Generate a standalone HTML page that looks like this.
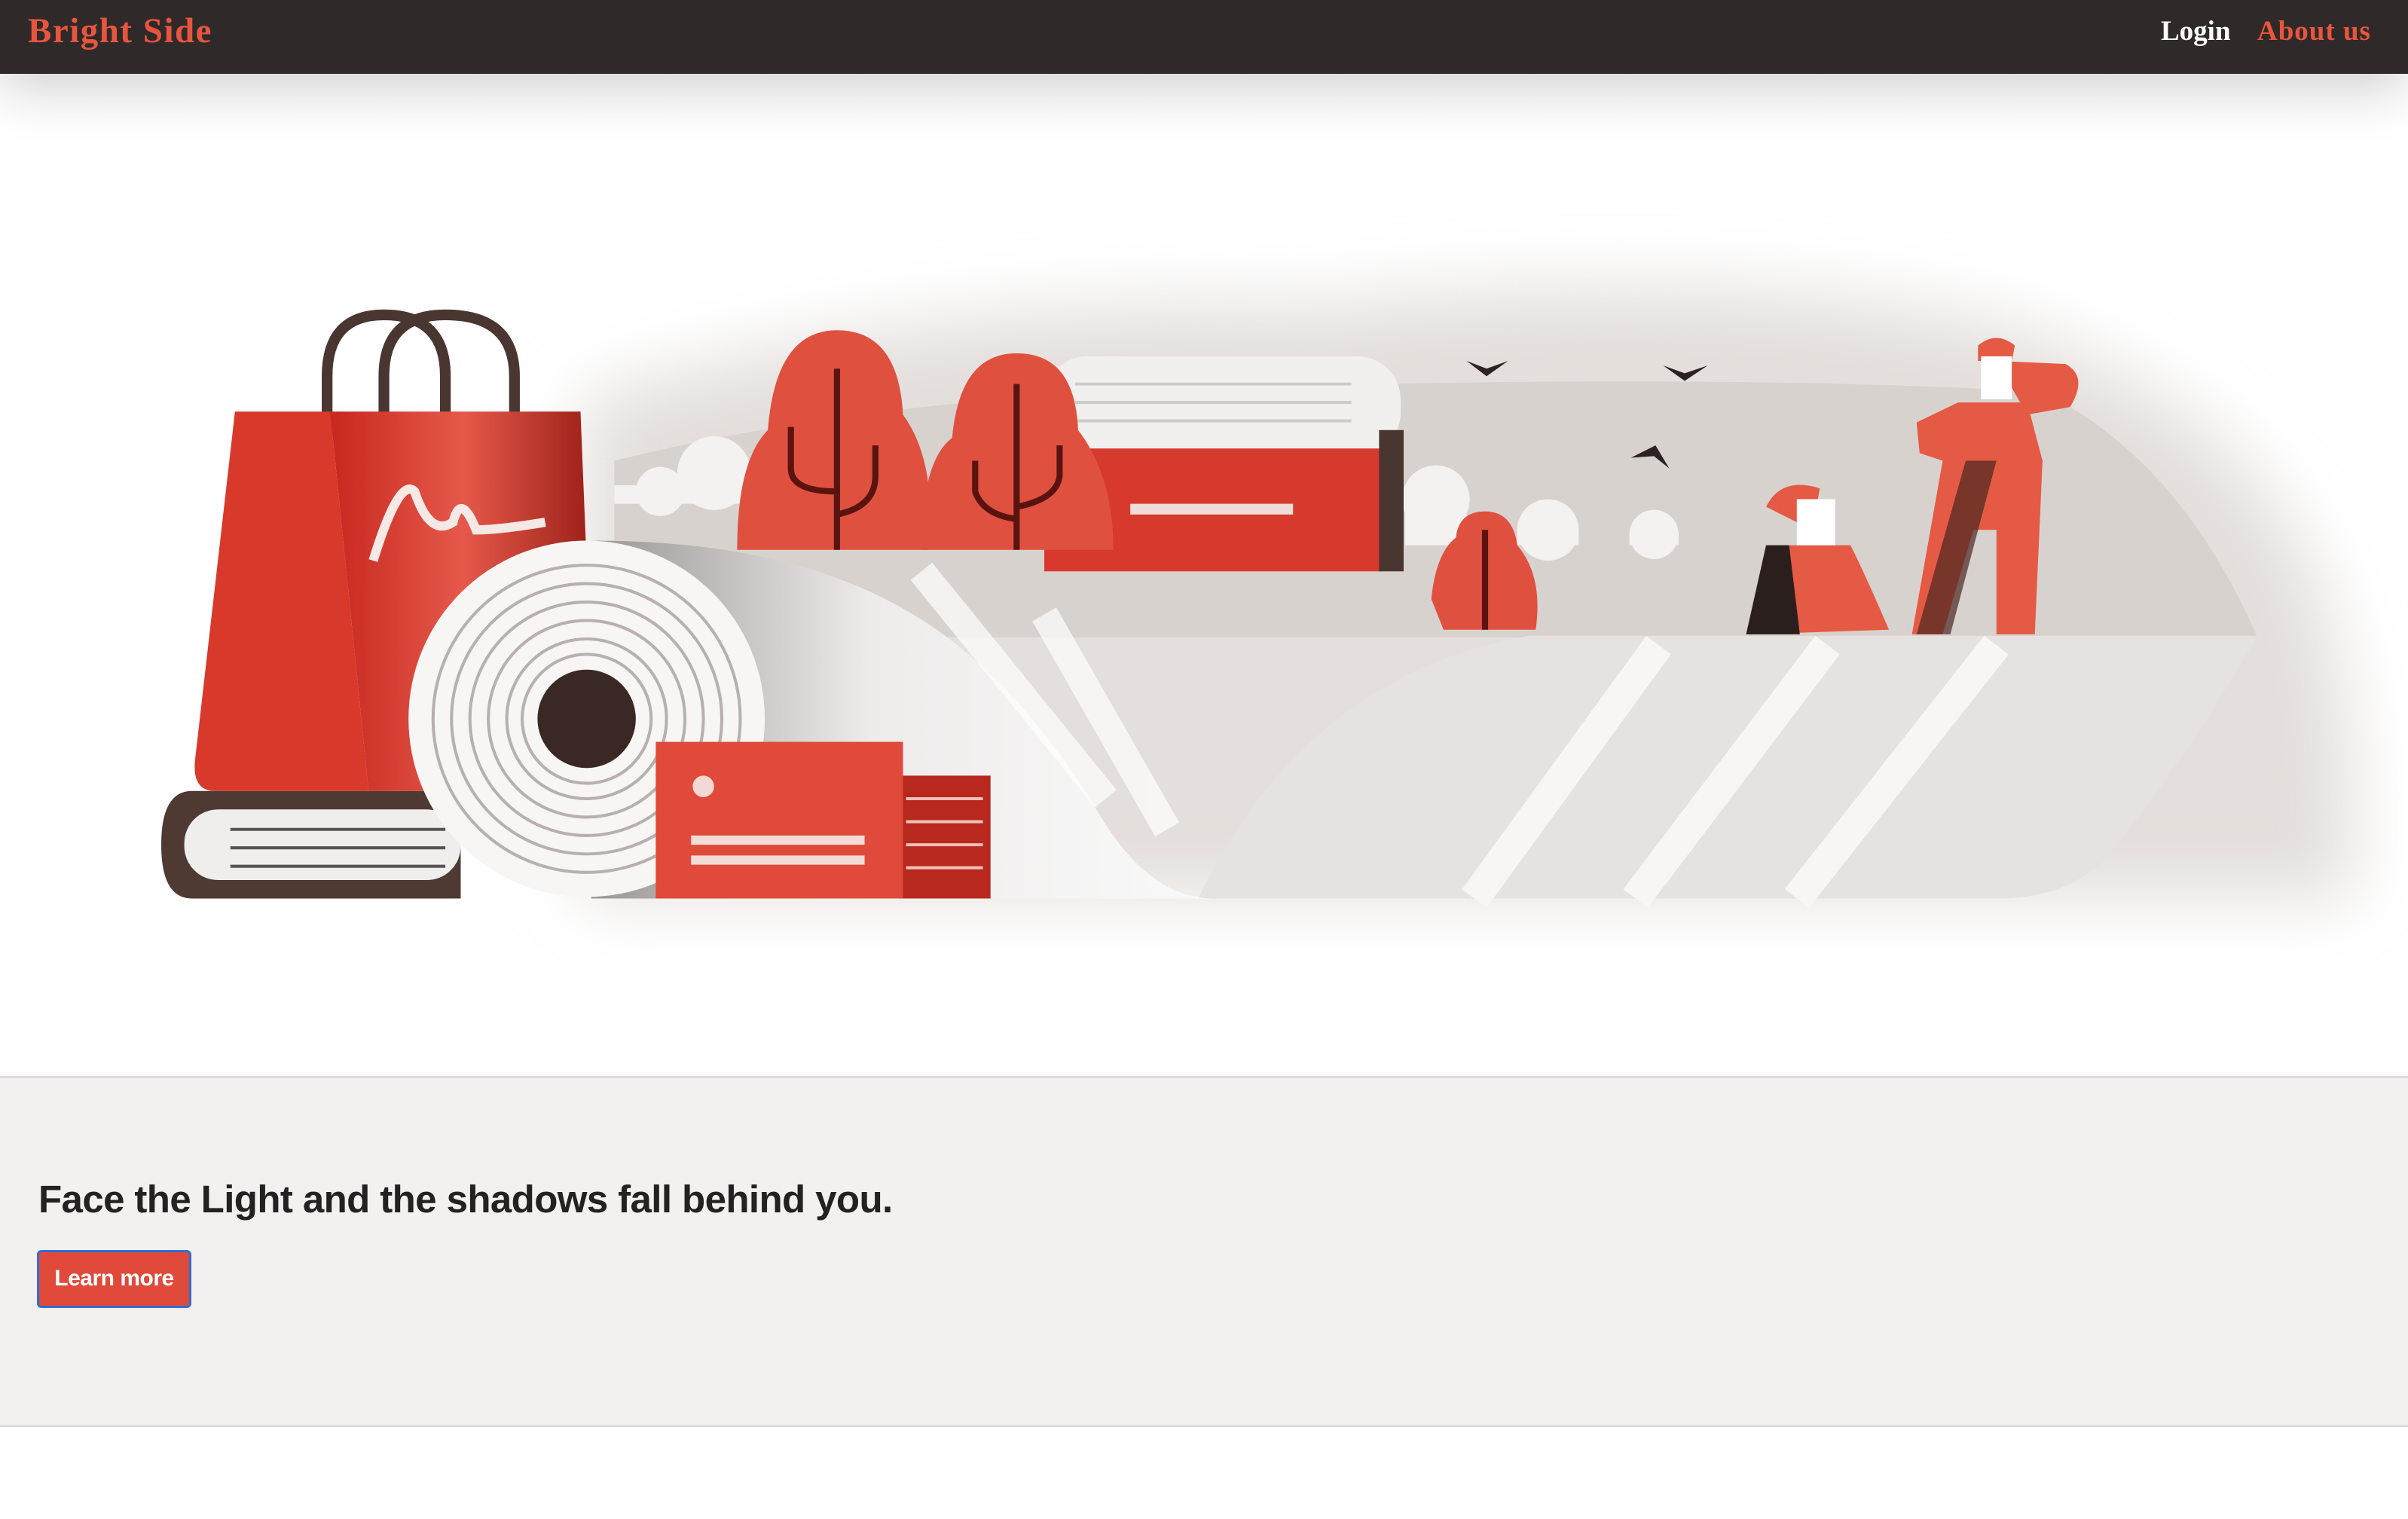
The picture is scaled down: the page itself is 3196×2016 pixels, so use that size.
<!DOCTYPE html>
<html><head><meta charset="utf-8"><style>
*{margin:0;padding:0;box-sizing:border-box}
html,body{width:3196px;height:2016px;overflow:hidden;background:#fff;font-family:"Liberation Sans",sans-serif}
.nav{position:absolute;left:0;top:0;width:3196px;height:98px;background:#2f2a29;box-shadow:0 22px 70px rgba(0,0,0,.18);z-index:2}
.brand{position:absolute;left:37px;top:14px;font:bold 47px "Liberation Serif",serif;color:#e8553f;letter-spacing:1.5px}
.login{position:absolute;left:2868px;top:20px;font:bold 37px "Liberation Serif",serif;color:#fff;letter-spacing:0}
.about{position:absolute;left:2996px;top:20px;font:bold 37px "Liberation Serif",serif;color:#e8553f;letter-spacing:1px}
.ill{position:absolute;left:0;top:0;width:3196px;height:2016px}
.band{position:absolute;left:0;top:1428px;width:3196px;height:466px;background:#f3f0ef;border-top:3px solid #dcdcdc;border-bottom:3px solid #dcdcdc}
.h{position:absolute;left:51px;top:131px;font-size:51px;font-weight:bold;color:#222;letter-spacing:-0.6px}
.btn{position:absolute;left:49px;top:228px;width:205px;height:77px;background:#df4a3a;border:3px solid #2f6fd6;border-radius:6px;color:#fff;font-size:30px;font-weight:bold;text-align:center;line-height:70px;letter-spacing:-.5px}
</style></head><body>
<div class="nav"><div class="brand">Bright Side</div><div class="login">Login</div><div class="about">About us</div></div>
<svg class="ill" viewBox="0 0 1568 989" preserveAspectRatio="none">
<defs>
<filter id="bl" x="-20%" y="-20%" width="140%" height="140%"><feGaussianBlur stdDeviation="22"/></filter>
<linearGradient id="rd" x1="0" x2="1"><stop offset="0" stop-color="#c8281f"/><stop offset=".5" stop-color="#e5594a"/><stop offset="1" stop-color="#9a1e17"/></linearGradient>
<linearGradient id="pp" x1="0" x2="1"><stop offset="0" stop-color="#9a9694"/><stop offset=".45" stop-color="#eeeceb"/><stop offset="1" stop-color="#fafafa"/></linearGradient>
</defs>
<path d="M380 260 Q600 190 850 200 Q1100 170 1300 210 Q1460 260 1510 380 Q1540 480 1530 585 L380 585 Z" fill="#e4dfdc" filter="url(#bl)"/>
<path d="M400 300 Q600 250 900 250 Q1150 245 1330 255 Q1420 300 1470 415 L400 415 Z" fill="#d8d2cf"/>
<!-- clouds -->
<g fill="#f4f2f1"><circle cx="430" cy="320" r="16"/><circle cx="465" cy="308" r="24"/><rect x="400" y="316" width="95" height="12"/>
<circle cx="935" cy="325" r="22"/><rect x="915" y="325" width="40" height="30"/><circle cx="1008" cy="345" r="20"/><rect x="988" y="345" width="40" height="10"/><circle cx="1077" cy="348" r="16"/><rect x="1061" y="348" width="32" height="7"/></g>
<!-- book behind -->
<rect x="680" y="232" width="232" height="65" rx="28" fill="#f2f0ef"/>
<g stroke="#ccc" stroke-width="2"><line x1="700" y1="250" x2="880" y2="250"/><line x1="700" y1="262" x2="880" y2="262"/><line x1="700" y1="274" x2="880" y2="274"/></g>
<rect x="680" y="292" width="220" height="80" fill="#d73a2c"/><rect x="898" y="280" width="16" height="92" fill="#4a3630"/>
<rect x="736" y="328" width="106" height="7" fill="#f0dcd8"/>
<!-- trees -->
<g fill="#e0503f"><path d="M480 358 Q480 300 500 280 Q505 215 545 215 Q585 215 588 270 Q610 300 605 358Z"/>
<path d="M600 358 Q600 300 620 285 Q625 230 662 230 Q700 230 702 280 Q725 310 725 358Z"/>
<path d="M932 390 Q935 360 948 350 Q950 333 967 333 Q985 333 988 355 Q1005 375 1000 410 L940 410Z"/></g>
<g stroke="#5a1410" stroke-width="4" fill="none"><path d="M545 240 V358 M515 278 V305 Q515 320 545 320 M570 290 V310 Q570 330 545 335"/>
<path d="M662 250 V358 M635 300 V320 Q640 335 662 338 M690 290 V310 Q688 325 662 330"/><path d="M967 345 V410"/></g>
<!-- birds -->
<g fill="#2a2322"><path d="M955 235 L968 245 L982 235 L968 240Z"/><path d="M1083 238 L1097 248 L1112 238 L1097 243Z"/><path d="M1062 298 L1078 290 L1087 305 L1077 297Z"/></g>
<!-- people -->
<g fill="#e55a44"><path d="M1288 225 Q1300 215 1312 225 L1310 235 L1288 235Z"/><path d="M1275 262 L1320 262 L1330 300 L1325 413 L1300 413 L1300 345 L1285 345 L1265 413 L1245 413 L1265 300 L1250 295 L1248 275Z"/><path d="M1300 235 L1345 237 Q1360 245 1348 265 L1320 270Z"/><path d="M1150 330 Q1160 310 1185 318 L1180 345 Z"/><path d="M1150 355 L1205 355 Q1215 375 1230 410 L1140 413 Z"/></g>
<rect x="1290" y="232" width="20" height="28" fill="#fff"/><rect x="1170" y="325" width="25" height="30" fill="#fff"/>
<path d="M1150 355 L1165 355 L1172 413 L1137 413Z" fill="#2b1f1d"/><path d="M1280 300 L1300 300 L1270 413 L1248 413Z" fill="#4a2520" opacity=".7"/>
<!-- back sheet -->
<path d="M780 585 Q850 440 995 414 L1470 414 Q1420 500 1370 560 Q1345 585 1300 585Z" fill="#e6e2e0"/>
<g stroke="#f7f6f5" stroke-width="20" fill="none"><path d="M1080 420 L960 585"/><path d="M1190 420 L1065 585"/><path d="M1300 420 L1170 585"/></g>
<!-- front curl -->
<path d="M385 352 C580 352 650 430 710 520 Q745 585 790 585 L385 585Z" fill="url(#pp)"/>
<g stroke="#fff" stroke-width="18" opacity=".7" fill="none"><path d="M600 372 L720 520"/><path d="M680 400 L760 540"/></g>
<!-- bottom book -->
<path d="M125 515 L300 515 L300 585 L125 585 Q105 585 105 550 Q105 515 125 515Z" fill="#4e3a32"/>
<rect x="120" y="527" width="180" height="46" rx="22" fill="#f0eeed"/>
<g stroke="#555" stroke-width="2"><line x1="150" y1="540" x2="290" y2="540"/><line x1="150" y1="552" x2="290" y2="552"/><line x1="150" y1="564" x2="290" y2="564"/></g>
<!-- bag -->
<g fill="none" stroke="#4a3630" stroke-width="7"><path d="M213 300 V245 Q213 205 250 205 Q290 205 290 245 V295"/><path d="M250 300 V245 Q250 205 290 205 Q335 205 335 245 V295"/></g>
<path d="M153 268 L215 268 L240 515 L140 515 Q125 515 127 495Z" fill="#d8392b"/>
<path d="M215 268 L378 268 L388 515 L240 515Z" fill="url(#rd)"/>
<path d="M243 365 Q260 310 270 320 Q280 350 295 340 Q300 320 310 345 Q325 345 355 340" stroke="#f6e8e4" stroke-width="6" fill="none"/>
<!-- roll -->
<circle cx="382" cy="468" r="116" fill="#f7f6f5"/>
<g fill="none" stroke="#b8b0ae" stroke-width="2"><circle cx="382" cy="468" r="100"/><circle cx="382" cy="468" r="88"/><circle cx="382" cy="468" r="76"/><circle cx="382" cy="468" r="64"/><circle cx="382" cy="468" r="52"/><circle cx="382" cy="468" r="42"/></g>
<circle cx="382" cy="468" r="32" fill="#3a2824"/>
<!-- card -->
<rect x="585" y="505" width="60" height="80" fill="#b8281f"/>
<g stroke="#f0c0b8" stroke-width="2"><line x1="590" y1="520" x2="640" y2="520"/><line x1="590" y1="535" x2="640" y2="535"/><line x1="590" y1="550" x2="640" y2="550"/><line x1="590" y1="565" x2="640" y2="565"/></g>
<rect x="427" y="483" width="161" height="102" fill="#df4a3a"/>
<circle cx="458" cy="512" r="7" fill="#f5d8d3"/>
<rect x="450" y="544" width="113" height="6" fill="#f3dcd8"/><rect x="450" y="557" width="113" height="6" fill="#f3dcd8"/>
</svg>
<div class="band"><div class="h">Face the Light and the shadows fall behind you.</div><div class="btn">Learn more</div></div>
</body></html>
